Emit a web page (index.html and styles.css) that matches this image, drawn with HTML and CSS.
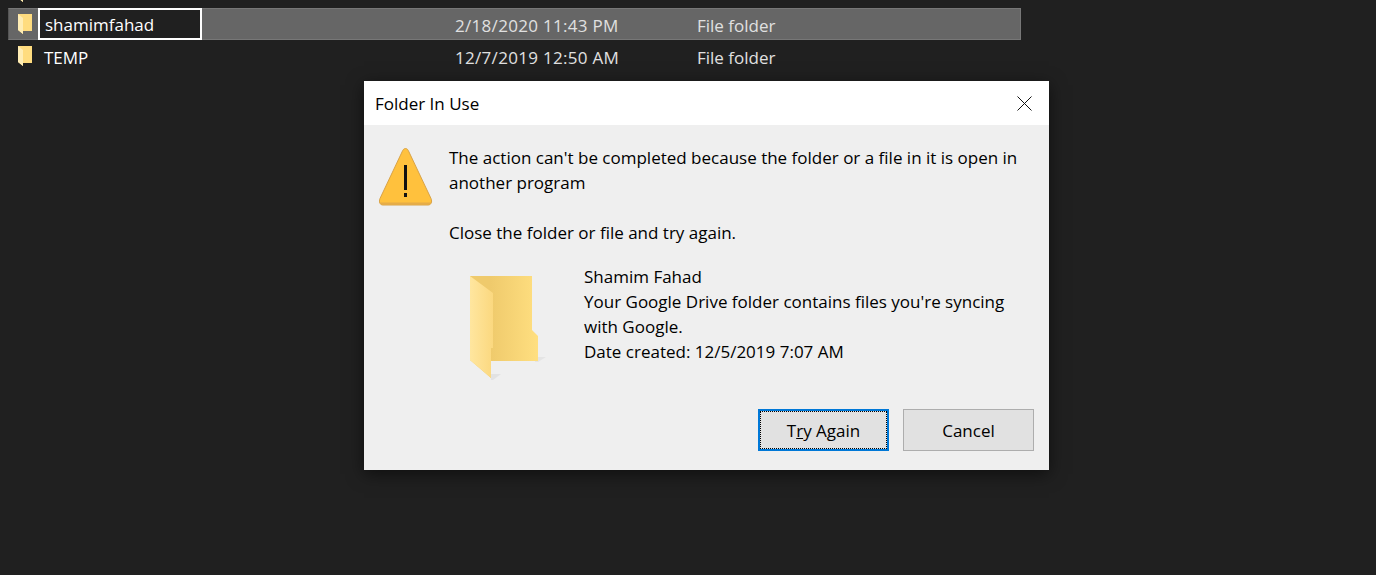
FILE: index.html
```html
<!DOCTYPE html>
<html lang="en">
<head>
<meta charset="utf-8">
<title>Folder In Use</title>
<link rel="stylesheet" href="styles.css">
</head>
<body>
<svg class="defs" width="0" height="0" aria-hidden="true">
  <defs>
    <linearGradient id="back" x1="0" x2="1" y1="0" y2="0"><stop offset="0.3" stop-color="#efca6c"/><stop offset="1" stop-color="#ffdf80"/></linearGradient>
    <linearGradient id="front" x1="0" x2="1" y1="0" y2="0"><stop offset="0" stop-color="#ffe69f"/><stop offset="1" stop-color="#fbd87f"/></linearGradient>
    <symbol id="small-folder" viewBox="0 0 16 22">
      <path d="M1 1H15V18H6V21L1 17Z" fill="#ffdc7f"/>
      <path d="M1 1L6 5V21L1 17Z" fill="#ffedb5"/>
    </symbol>
  </defs>
</svg>
<main class="list">
  <div class="row">
    <svg class="folder"><use href="#small-folder"/></svg>
    <span class="name"></span><span class="date">2/5/2020 7:07 PM</span><span class="type"></span>
  </div>
  <div class="row row-selected">
    <svg class="folder"><use href="#small-folder"/></svg>
    <span class="name name-edit">shamimfahad</span><span class="date">2/18/2020 11:43 PM</span><span class="type">File folder</span>
  </div>
  <div class="row">
    <svg class="folder"><use href="#small-folder"/></svg>
    <span class="name">TEMP</span><span class="date">12/7/2019 12:50 AM</span><span class="type">File folder</span>
  </div>
</main>
<section class="dialog">
  <header class="titlebar">
    <span>Folder In Use</span>
    <svg class="close" viewBox="0 0 15 15"><path d="M.5.5l14 14M14.500.5l-14 14" stroke="#111" stroke-width="1" fill="none"/></svg>
  </header>
  <div class="body">
    <div class="message">
      <svg class="warn" viewBox="0 0 54 58">
        <path d="M26.500 .5C25 .5 24 1.500 23 4L1 50.500C-.5 54 1 57 4 57H49C52 57 53.500 54 52 50.500L30 4C29 1.500 28 .5 26.500 .5Z" fill="#ffc13d" stroke="#d9a347" stroke-width="1"/>
        <path d="M1 54.500C1.500 56 2.500 57 4 57H49C50.500 57 51.500 56 52 54.500Z" fill="#e5ac48"/>
        <rect x="25" y="17" width="3" height="25" fill="#111"/>
        <rect x="25" y="45" width="3" height="4" fill="#111"/>
      </svg>
      <div class="message-text">
        <p>The action can't be completed because the folder or a file in it is open in another program</p>
        <p class="hint">Close the folder or file and try again.</p>
      </div>
    </div>
    <div class="details">
      <svg class="big-folder" viewBox="0 0 76 108">
        <path d="M65 81h11l-8 5H65Z" fill="#e4e4e4"/>
        <path d="M21 98h10l-8 6h-2Z" fill="#e2e2e2"/>
        <path d="M0 0H62V54L68 60V85H21V102L0 84Z" fill="url(#back)"/>
        <path d="M0 0L23 17V72H21V102L0 84Z" fill="url(#front)"/>
      </svg>
      <div class="info">
        <div>Shamim Fahad</div>
        <div>Your Google Drive folder contains files you're syncing with Google.</div>
        <div>Date created: 12/5/2019 7:07 AM</div>
      </div>
    </div>
    <div class="actions">
      <button class="btn btn-default"><span class="focus-ring">T<u>r</u>y Again</span></button>
      <button class="btn">Cancel</button>
    </div>
  </div>
</section>
</body>
</html>
```
FILE: styles.css
```css
* { box-sizing: border-box; }
html, body { margin: 0; height: 100%; }
body {
  background: #202020;
  font-family: "Open Sans", "Noto Sans", sans-serif;
  font-size: 17px;
  color: #000;
  overflow: hidden;
  position: relative;
}
.defs { position: absolute; }
.list { margin: -24px 0 0 8px; width: 1013px; }
.row {
  display: flex;
  align-items: center;
  height: 32px;
  color: #fff;
}
.row-selected { background: #666; border: 1px solid #777; border-left-color: #555; }
.folder { width: 16px; height: 22px; margin-left: 9px; flex: none; }
.row-selected .folder { margin-left: 8px; }
.name { width: 411px; margin-left: 11px; padding-top: 2px; }
.name-edit {
  width: 164px;
  height: 32px;
  margin: 0 253px 0 5px;
  padding: 0 5px;
  line-height: 30px;
  background: #202020;
  border: 2px solid #fff;
  position: relative;
  flex: none;
}
.date { width: 242px; color: #e0e0e0; letter-spacing: .3px; padding-top: 2px; }
.type { color: #e0e0e0; padding-top: 2px; }
.dialog {
  position: absolute;
  left: 364px;
  top: 81px;
  width: 685px;
  height: 389px;
  background: #efefef;
  box-shadow: 0 4px 16px rgba(0,0,0,.55);
  display: flex;
  flex-direction: column;
}
.titlebar {
  height: 44px;
  background: #fff;
  display: flex;
  align-items: center;
  justify-content: space-between;
  padding: 0 17px 0 11px;
  flex: none;
}
.close { width: 15px; height: 15px; }
.body { flex: 1; display: flex; flex-direction: column; padding: 20px 15px 19px 15px; }
.message { display: flex; }
.warn { width: 54px; height: 58px; margin: 3px 16px 0 0; flex: none; }
.message-text { width: 590px; line-height: 25px; }
.message-text p { margin: 0; }
.message-text .hint { margin-top: 25px; }
.details { display: flex; margin-top: 19px; }
.big-folder { width: 76px; height: 108px; margin: 12px 38px 0 91px; flex: none; }
.info { width: 440px; line-height: 25px; }
.actions { margin-top: auto; display: flex; justify-content: flex-end; gap: 14px; }
.btn {
  width: 131px;
  height: 42px;
  background: #e1e1e1;
  border: 1px solid #adadad;
  font: inherit;
  color: #000;
  padding: 0;
}
.btn-default { border: 2px solid #0078d7; padding: 0; }
.focus-ring {
  display: flex;
  align-items: center;
  justify-content: center;
  height: 100%;
  border: 1px dotted #000;
}
```
